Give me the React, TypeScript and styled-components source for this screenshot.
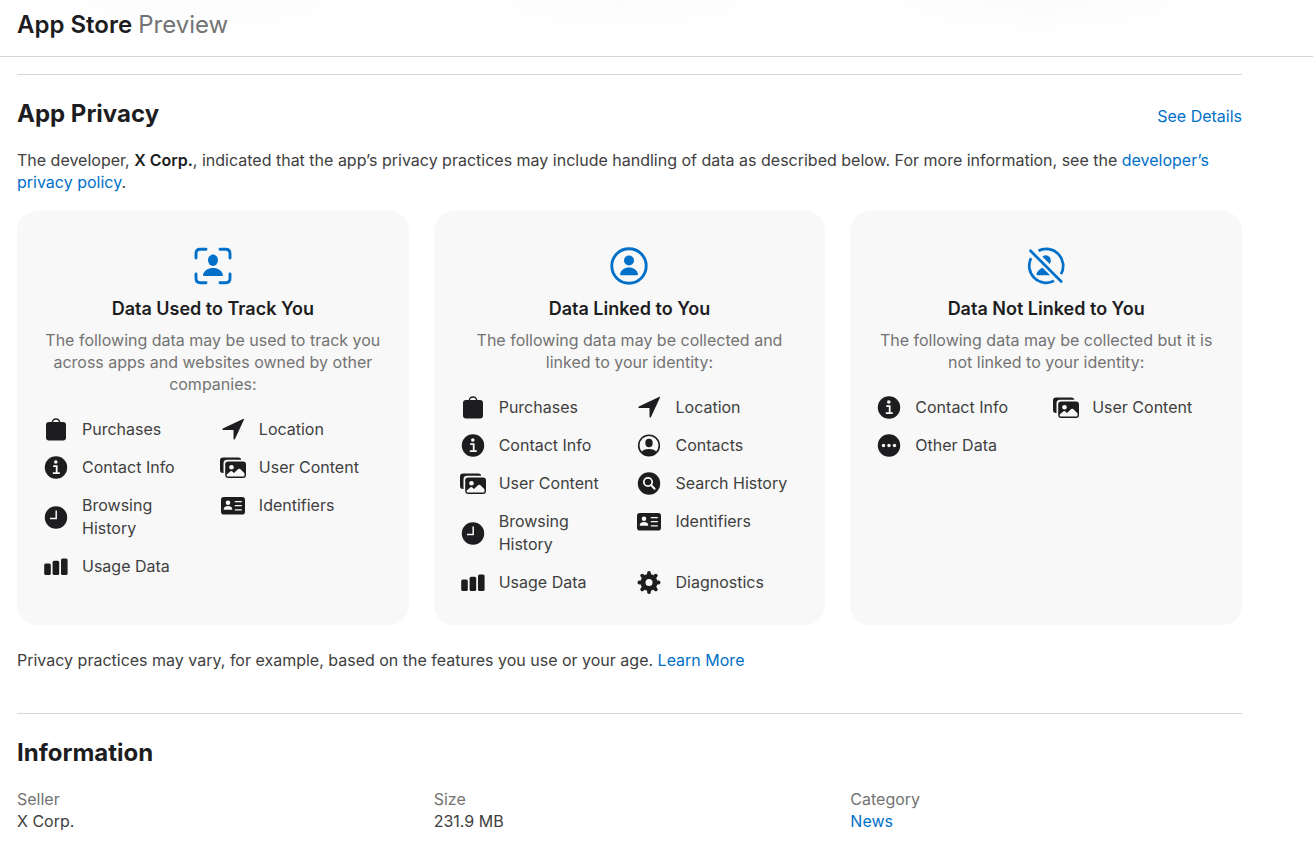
import React from "react";
import styled, { createGlobalStyle } from "styled-components";

const colors = {
  text: "#1d1d1f",
  body: "#404040",
  muted: "#737373",
  link: "#0070c9",
  rule: "#d6d6d6",
  card: "#f8f8f8",
};

const GlobalStyle = createGlobalStyle`
  * { box-sizing: border-box; }
  body {
    margin: 0;
    background: #fff;
    color: ${colors.body};
    font-family: Inter, "Liberation Sans", sans-serif;
    font-size: 16px;
    line-height: 22px;
  }
  h1, h2, h3, p, ul, dl, dd { margin: 0; padding: 0; }
`;

const Header = styled.header`
  border-bottom: 1px solid ${colors.rule};
  padding: 10px 17px 16px;
  background:
    radial-gradient(ellipse 180px 38px at 1038px 0, #fbfbfb, transparent),
    radial-gradient(ellipse 180px 38px at 622px 0, #fcfcfc, transparent),
    radial-gradient(ellipse 180px 38px at 206px 0, #fcfcfc, transparent);
`;

const SiteTitle = styled.h1`
  color: ${colors.text};
  font-size: 24px;
  font-weight: 600;
  line-height: 30px;
`;

const Preview = styled.span`
  color: ${colors.muted};
  font-weight: 400;
`;

const Main = styled.main`
  padding: 17px 71px 0 17px;
`;

const Section = styled.section`
  border-top: 1px solid ${colors.rule};
  padding: 24px 0 42px;
`;

const SectionHead = styled.div`
  display: flex;
  align-items: baseline;
  justify-content: space-between;
  margin-bottom: 20px;
`;

const SectionTitle = styled.h2`
  color: ${colors.text};
  font-size: 24px;
  font-weight: 700;
  line-height: 30px;
`;

const Link = styled.a`
  color: ${colors.link};
  text-decoration: none;
`;

const Strong = styled.b`
  color: ${colors.text};
  font-weight: 600;
`;

const Columns = styled.div`
  display: grid;
  grid-template-columns: repeat(3, 1fr);
  gap: 25px;
  margin: 18px 0 24px;
`;

const Card = styled.article`
  display: flex;
  flex-direction: column;
  align-items: center;
  padding: 36px 25px 31px;
  border-radius: 20px;
  background: ${colors.card};
`;

const CardIcon = styled.svg`
  width: 38px;
  height: 38px;
  color: ${colors.link};
`;

const CardTitle = styled.h3`
  margin: 13px 0 9px;
  color: ${colors.text};
  font-size: 18px;
  font-weight: 600;
  line-height: 22px;
`;

const CardText = styled.p`
  color: ${colors.muted};
  text-align: center;
`;

const DataList = styled.ul`
  display: grid;
  grid-template-columns: repeat(2, 1fr);
  gap: 15px 12px;
  align-self: stretch;
  margin-top: 23px;
  list-style: none;
`;

const DataItem = styled.li`
  display: grid;
  grid-template-columns: 28px 1fr;
  column-gap: 12px;
  align-items: center;
  align-self: start;
  line-height: 23px;
`;

const Glyph = styled.svg`
  width: 28px;
  height: 23px;
  color: ${colors.text};
`;

const Facts = styled.dl`
  display: grid;
  grid-template-columns: repeat(3, 1fr);
  gap: 25px;
`;

const FactName = styled.dt`
  color: ${colors.muted};
`;

const glyphs = {
  Purchases: (
    <>
      <rect x="4" y="4" width="20" height="18.5" rx="3" fill="currentColor" />
      <path d="M10.300 5V4.500a3.700 3.500 0 0 1 7.400 0V5" fill="none" stroke="currentColor" strokeWidth="1.5" />
    </>
  ),
  Location: <path d="M3.8 10.6 24 .9c.7-.3 1.2.1.9.8L16 20.9c-.4.9-1.5.7-1.5-.3V12H4.2c-1 0-1.2-1-.4-1.4Z" fill="currentColor" />,
  "Contact Info": (
    <>
      <circle cx="14" cy="11.5" r="11.2" fill="currentColor" />
      <circle cx="13.8" cy="6" r="1.8" fill={colors.card} />
      <path d="M11.2 10.1h3.5v6.8M10.8 17.1h7" fill="none" stroke={colors.card} strokeWidth="1.8" />
    </>
  ),
  "User Content": (
    <>
      <path d="M4.5 16.9H4a3 3 0 0 1-3-3V4.500a3 3 0 0 1 3-3h15.500a3 3 0 0 1 2.900 2.300H8a3.500 3.500 0 0 0-3.500 3.500Z" fill="currentColor" />
      <rect x="6.200" y="5.500" width="20.800" height="16.500" rx="3" fill="currentColor" />
      <circle cx="12.500" cy="11.200" r="2.300" fill={colors.card} />
      <path d="M7.700 18.500 11.500 15.300q.8-.6 1.500 0l2 1.700 4.200-3.900q1-.8 2 0l4.300 4.100v2.300q0 1-1 1h-15.800q-1 0-1-1Z" fill={colors.card} />
    </>
  ),
  "Browsing History": (
    <>
      <circle cx="14" cy="11.5" r="11.200" fill="currentColor" />
      <path d="M14.200 4.500v8H8" fill="none" stroke={colors.card} strokeWidth="1.500" />
    </>
  ),
  Identifiers: (
    <>
      <rect x="2" y="3" width="24" height="17.500" rx="2.800" fill="currentColor" />
      <circle cx="9" cy="8.700" r="2.300" fill={colors.card} />
      <path d="M4.700 15.800q0-3.700 4.300-3.700t4.300 3.700Z" fill={colors.card} />
      <path d="M15.800 7.600h7M15.800 11.700h7M15.800 15.800h7" stroke={colors.card} strokeWidth="1.300" />
    </>
  ),
  "Usage Data": (
    <g fill="currentColor">
      <rect x="2.200" y="8.500" width="6.600" height="11.500" rx="1.500" />
      <rect x="10.600" y="5.800" width="6.600" height="14.200" rx="1.500" />
      <rect x="19" y="3.500" width="6.600" height="16.500" rx="1.500" />
    </g>
  ),
  Contacts: (
    <>
      <circle cx="14" cy="11.500" r="10.300" fill="none" stroke="currentColor" strokeWidth="1.600" />
      <ellipse cx="14" cy="9" rx="3.700" ry="4.200" fill="currentColor" />
      <path d="M6.500 18q1.800-3 7.500-3t7.500 3q-2.800 3.800-7.500 3.800T6.500 18Z" fill="currentColor" />
    </>
  ),
  "Search History": (
    <>
      <circle cx="14" cy="11.500" r="11.200" fill="currentColor" />
      <circle cx="13" cy="10" r="4.200" fill="none" stroke={colors.card} strokeWidth="1.800" />
      <path d="m16 13 3.600 3.700" stroke={colors.card} strokeWidth="2" strokeLinecap="round" />
    </>
  ),
  Diagnostics: (
    <g fill="none" stroke="currentColor">
      <circle cx="14" cy="11.500" r="6" strokeWidth="5" />
      <path
        d="M14 4V1.900M14 19v2.100M6.500 11.500H4.400M21.500 11.500h2.100M8.700 6.200 7.200 4.700M19.300 16.800l1.500 1.500M8.700 16.800l-1.500 1.500M19.300 6.200l1.500-1.500"
        strokeWidth="3.800"
        strokeLinecap="round"
      />
    </g>
  ),
  "Other Data": (
    <>
      <circle cx="14" cy="11.500" r="11.200" fill="currentColor" />
      <g fill={colors.card}>
        <circle cx="8.500" cy="11.500" r="1.700" />
        <circle cx="14" cy="11.500" r="1.700" />
        <circle cx="19.500" cy="11.500" r="1.700" />
      </g>
    </>
  ),
};

type DataKind = keyof typeof glyphs;

const person = (
  <>
    <ellipse cx="19" cy="13.300" rx="5" ry="5.700" fill="currentColor" />
    <path d="M10 29q-1.300 0-.9-1.600C10.300 23.600 14 21 19 21s8.700 2.600 9.900 6.400q.4 1.600-.9 1.600Z" fill="currentColor" />
  </>
);

const trackIcon = (
  <>
    <path
      d="M2 11V6.500Q2 2.300 6.200 2.300H12M26 2.300h5.800Q36 2.300 36 6.500V11M36 27v4.500q0 4.200-4.200 4.200H26M12 35.700H6.200Q2 35.700 2 31.500V27"
      fill="none"
      stroke="currentColor"
      strokeWidth="2.900"
      strokeLinecap="round"
    />
    {person}
  </>
);

const linkedIcon = (
  <>
    <circle cx="19" cy="19" r="17.200" fill="none" stroke="currentColor" strokeWidth="2.900" />
    <circle cx="19" cy="13.500" r="5" fill="currentColor" />
    <path d="M11 28.300q-1.200 0-.9-1.500C11 23.200 14.400 20.500 19 20.500s8 2.700 8.900 6.300q.3 1.500-.9 1.500Z" fill="currentColor" />
  </>
);

const notLinkedIcon = (
  <>
    <path d="M11.500 3.700A17 17 0 0 1 34 27.200M27 33.900A17 17 0 0 1 4 11.200" fill="none" stroke="currentColor" strokeWidth="2.700" />
    <path d="m3.500 3.800 30.700 30.700" stroke="currentColor" strokeWidth="2.700" strokeLinecap="round" />
    <path d="M15.500 9.800q2-1.900 4.500-1.300 3.700.9 3.800 5 0 1.900-1.100 3.500Z" fill="currentColor" />
    <path d="m15.600 20.700 7.500 7.600H10.800q-1.800 0-1.200-1.700 1.500-4 6-5.900Z" fill="currentColor" />
  </>
);

const cards: { title: string; text: string; icon: React.ReactNode; items: DataKind[] }[] = [
  {
    title: "Data Used to Track You",
    text: "The following data may be used to track you across apps and websites owned by other companies:",
    icon: trackIcon,
    items: ["Purchases", "Location", "Contact Info", "User Content", "Browsing History", "Identifiers", "Usage Data"],
  },
  {
    title: "Data Linked to You",
    text: "The following data may be collected and linked to your identity:",
    icon: linkedIcon,
    items: [
      "Purchases",
      "Location",
      "Contact Info",
      "Contacts",
      "User Content",
      "Search History",
      "Browsing History",
      "Identifiers",
      "Usage Data",
      "Diagnostics",
    ],
  },
  {
    title: "Data Not Linked to You",
    text: "The following data may be collected but it is not linked to your identity:",
    icon: notLinkedIcon,
    items: ["Contact Info", "User Content", "Other Data"],
  },
];

export default function App() {
  return (
    <>
      <GlobalStyle />
      <Header>
        <SiteTitle>
          App Store <Preview>Preview</Preview>
        </SiteTitle>
      </Header>
      <Main>
        <Section>
          <SectionHead>
            <SectionTitle>App Privacy</SectionTitle>
            <Link href="#details">See Details</Link>
          </SectionHead>
          <p>
            The developer, <Strong>X Corp.</Strong>, indicated that the app’s privacy practices may include handling of
            data as described below. For more information, see the <Link href="#policy">developer’s privacy policy</Link>.
          </p>
          <Columns>
            {cards.map((card) => (
              <Card key={card.title}>
                <CardIcon viewBox="0 0 38 38" aria-hidden="true">
                  {card.icon}
                </CardIcon>
                <CardTitle>{card.title}</CardTitle>
                <CardText>{card.text}</CardText>
                <DataList>
                  {card.items.map((item) => (
                    <DataItem key={item}>
                      <Glyph viewBox="0 0 28 23" aria-hidden="true">
                        {glyphs[item]}
                      </Glyph>
                      <span>{item}</span>
                    </DataItem>
                  ))}
                </DataList>
              </Card>
            ))}
          </Columns>
          <p>
            Privacy practices may vary, for example, based on the features you use or your age.{" "}
            <Link href="#learn-more">Learn More</Link>
          </p>
        </Section>
        <Section>
          <SectionHead>
            <SectionTitle>Information</SectionTitle>
          </SectionHead>
          <Facts>
            <div>
              <FactName>Seller</FactName>
              <dd>X Corp.</dd>
            </div>
            <div>
              <FactName>Size</FactName>
              <dd>231.9 MB</dd>
            </div>
            <div>
              <FactName>Category</FactName>
              <dd>
                <Link href="#news">News</Link>
              </dd>
            </div>
          </Facts>
        </Section>
      </Main>
    </>
  );
}
